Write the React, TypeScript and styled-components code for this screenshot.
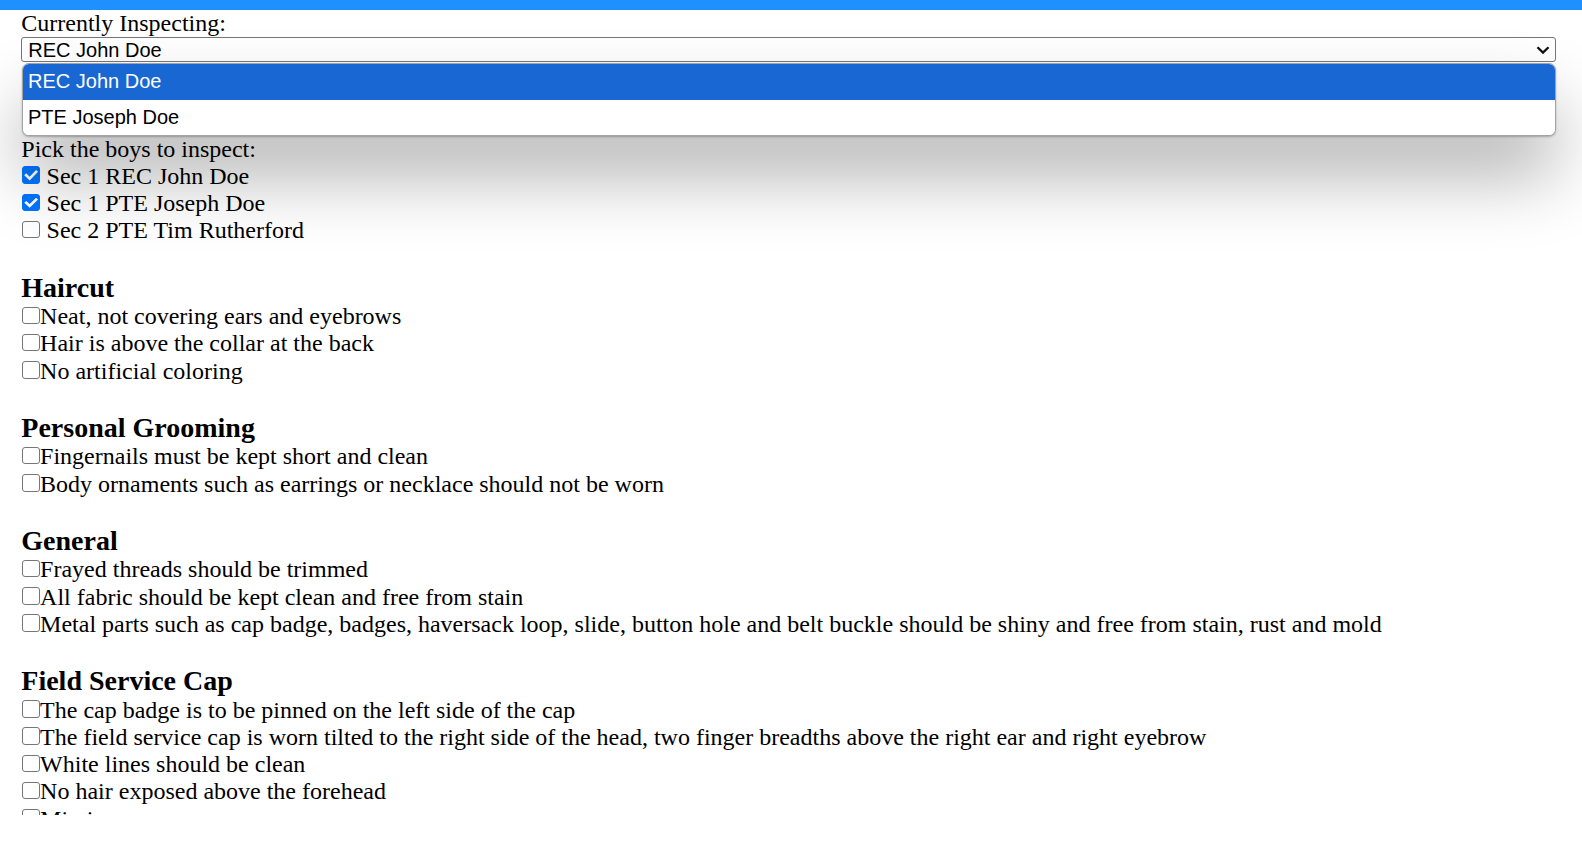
import React from "react";
import styled, { createGlobalStyle } from "styled-components";

const GlobalStyle = createGlobalStyle`
  html, body { margin: 0; padding: 0; background: #ffffff; }
  body { font-family: "Liberation Serif", "Times New Roman", serif; color: #000000; }
`;

const TopBar = styled.div`
  height: 10px;
  background: #1e90ff;
`;

const Page = styled.main`
  height: 804.5px;
  overflow: hidden;
  padding: 0 25.7px 0 21.3px;
  font-size: 24px;
  line-height: 27.25px;
`;

const Line = styled.div`
  white-space: nowrap;
`;

const SelectWrap = styled.div`
  position: relative;
  margin-bottom: 73.4px;
`;

const SelectBox = styled.div`
  box-sizing: border-box;
  height: 25px;
  display: flex;
  align-items: center;
  justify-content: space-between;
  padding: 0 5px 0 6px;
  border: 1px solid #767676;
  border-radius: 3px;
  background: #ffffff;
  font-family: "Liberation Sans", Arial, sans-serif;
  font-size: 20px;
  line-height: 22px;
`;

const Chevron = styled.svg`
  width: 14px;
  height: 10px;
  flex: none;
`;

const Popup = styled.div`
  position: absolute;
  z-index: 10;
  top: calc(100% + 0.75px);
  left: 0.7px;
  right: 0.3px;
  box-sizing: border-box;
  border: 1px solid #a3a3a3;
  border-radius: 7px;
  background: #ffffff;
  overflow: hidden;
  box-shadow: 0 1px 2px rgba(0, 0, 0, 0.25), 0 40px 70px rgba(0, 0, 0, 0.3);
  font-family: "Liberation Sans", Arial, sans-serif;
  font-size: 20px;
`;

const Option = styled.div<{ $active?: boolean }>`
  height: 35.5px;
  line-height: 34px;
  padding: 0 5px;
  background: ${(p) => (p.$active ? "#1967d2" : "#ffffff")};
  color: ${(p) => (p.$active ? "#ffffff" : "#000000")};
`;

const CheckRow = styled.label`
  display: block;
  white-space: nowrap;
`;

const checkSvg =
  "data:image/svg+xml;utf8," +
  encodeURIComponent(
    '<svg xmlns="http://www.w3.org/2000/svg" viewBox="0 0 17 17"><path d="M3.8 8.6 L7.1 11.9 L13.3 5.4" fill="none" stroke="#ffffff" stroke-width="2.6" stroke-linecap="square"/></svg>'
  );

const Check = styled.input.attrs({ type: "checkbox" })<{ $spaced?: boolean }>`
  appearance: none;
  -webkit-appearance: none;
  box-sizing: border-box;
  display: inline-block;
  width: 17.5px;
  height: 17.5px;
  margin: ${(p) => (p.$spaced ? "0 1px 0 0.8px" : "0 0.5px 0 0.8px")};
  vertical-align: baseline;
  border: 1.3px solid #767676;
  border-radius: 3px;
  background: #ffffff;

  &:checked {
    border-color: #0075ff;
    background: #0075ff url("${checkSvg}") center / 17px 17px no-repeat;
  }
`;

const Section = styled.section`
  margin-top: 27.25px;
`;

const Heading = styled.h3`
  margin: 0;
  font-size: 28px;
  line-height: 31.25px;
  font-weight: bold;
`;

const boys = [
  { label: "Sec 1 REC John Doe", checked: true },
  { label: "Sec 1 PTE Joseph Doe", checked: true },
  { label: "Sec 2 PTE Tim Rutherford", checked: false },
];

const sections: { title: string; items: string[] }[] = [
  {
    title: "Haircut",
    items: [
      "Neat, not covering ears and eyebrows",
      "Hair is above the collar at the back",
      "No artificial coloring",
    ],
  },
  {
    title: "Personal Grooming",
    items: [
      "Fingernails must be kept short and clean",
      "Body ornaments such as earrings or necklace should not be worn",
    ],
  },
  {
    title: "General",
    items: [
      "Frayed threads should be trimmed",
      "All fabric should be kept clean and free from stain",
      "Metal parts such as cap badge, badges, haversack loop, slide, button hole and belt buckle should be shiny and free from stain, rust and mold",
    ],
  },
  {
    title: "Field Service Cap",
    items: [
      "The cap badge is to be pinned on the left side of the cap",
      "The field service cap is worn tilted to the right side of the head, two finger breadths above the right ear and right eyebrow",
      "White lines should be clean",
      "No hair exposed above the forehead",
      "Missing",
      "Dirty",
    ],
  },
];

export default function App() {
  return (
    <>
      <GlobalStyle />
      <TopBar />
      <Page>
        <Line>Currently Inspecting:</Line>
        <SelectWrap>
          <SelectBox>
            <span>REC John Doe</span>
            <Chevron viewBox="0 0 14 10">
              <path d="M1.5 2.2 L7 7.6 L12.5 2.2" fill="none" stroke="#111" strokeWidth="2.3" />
            </Chevron>
          </SelectBox>
          <Popup>
            <Option $active>REC John Doe</Option>
            <Option>PTE Joseph Doe</Option>
          </Popup>
        </SelectWrap>
        <Line>Pick the boys to inspect:</Line>
        {boys.map((b) => (
          <CheckRow key={b.label}>
            <Check $spaced defaultChecked={b.checked} /> {b.label}
          </CheckRow>
        ))}
        {sections.map((s) => (
          <Section key={s.title}>
            <Heading>{s.title}</Heading>
            {s.items.map((it) => (
              <CheckRow key={it}>
                <Check />
                {it}
              </CheckRow>
            ))}
          </Section>
        ))}
      </Page>
    </>
  );
}
